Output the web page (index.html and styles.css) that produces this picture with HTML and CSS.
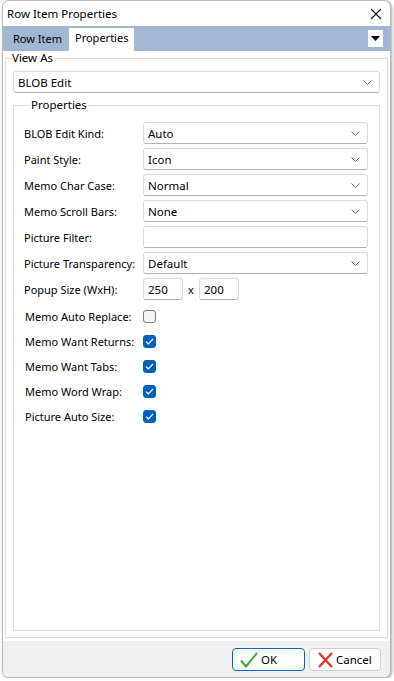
FILE: index.html
```html
<!DOCTYPE html>
<html lang="en">
<head>
    <meta charset="UTF-8">
    <title>Row Item Properties</title>
    <link rel="stylesheet" href="styles.css">
</head>
<body>
    <div class="window">
        <div class="titlebar">
            <span class="title">Row Item Properties</span>
            <svg class="closeIcon" width="12" height="12" viewBox="0 0 12 12">
                <path d="M1 1 L11 11 M11 1 L1 11" stroke="#1a1a1a" stroke-width="1.1" fill="none"/>
            </svg>
        </div>

        <div class="tabbar">
            <div class="tab">Row Item</div>
            <div class="tab active">Properties</div>
            <div class="tabMenu">
                <svg width="9" height="5" viewBox="0 0 9 5"><path d="M0 0 H9 L4.5 5 Z" fill="#000"/></svg>
            </div>
        </div>

        <div class="content">
            <fieldset class="group outer">
                <legend>View As</legend>
                <div class="combo wide">
                    <span>BLOB Edit</span>
                    <svg class="chev" width="9" height="5" viewBox="0 0 9 5"><path d="M0.5 0.5 L4.5 4.5 L8.5 0.5" stroke="#707070" fill="none"/></svg>
                </div>

                <fieldset class="group inner">
                    <legend>Properties</legend>

                    <div class="row">
                        <label class="lbl">BLOB Edit Kind:</label>
                        <div class="combo">
                            <span>Auto</span>
                            <svg class="chev" width="9" height="5" viewBox="0 0 9 5"><path d="M0.5 0.5 L4.5 4.5 L8.5 0.5" stroke="#707070" fill="none"/></svg>
                        </div>
                    </div>
                    <div class="row">
                        <label class="lbl">Paint Style:</label>
                        <div class="combo">
                            <span>Icon</span>
                            <svg class="chev" width="9" height="5" viewBox="0 0 9 5"><path d="M0.5 0.5 L4.5 4.5 L8.5 0.5" stroke="#707070" fill="none"/></svg>
                        </div>
                    </div>
                    <div class="row">
                        <label class="lbl">Memo Char Case:</label>
                        <div class="combo">
                            <span>Normal</span>
                            <svg class="chev" width="9" height="5" viewBox="0 0 9 5"><path d="M0.5 0.5 L4.5 4.5 L8.5 0.5" stroke="#707070" fill="none"/></svg>
                        </div>
                    </div>
                    <div class="row">
                        <label class="lbl">Memo Scroll Bars:</label>
                        <div class="combo">
                            <span>None</span>
                            <svg class="chev" width="9" height="5" viewBox="0 0 9 5"><path d="M0.5 0.5 L4.5 4.5 L8.5 0.5" stroke="#707070" fill="none"/></svg>
                        </div>
                    </div>
                    <div class="row">
                        <label class="lbl">Picture Filter:</label>
                        <div class="combo edit"></div>
                    </div>
                    <div class="row">
                        <label class="lbl">Picture Transparency:</label>
                        <div class="combo">
                            <span>Default</span>
                            <svg class="chev" width="9" height="5" viewBox="0 0 9 5"><path d="M0.5 0.5 L4.5 4.5 L8.5 0.5" stroke="#707070" fill="none"/></svg>
                        </div>
                    </div>
                    <div class="row">
                        <label class="lbl">Popup Size (WxH):</label>
                        <div class="combo edit small"><span>250</span></div>
                        <span class="times">x</span>
                        <div class="combo edit small"><span>200</span></div>
                    </div>

                    <div class="checks">
                        <div class="checkRow">
                            <label class="lbl">Memo Auto Replace:</label>
                            <span class="check"></span>
                        </div>
                        <div class="checkRow">
                            <label class="lbl">Memo Want Returns:</label>
                            <span class="check on"><svg width="9" height="7" viewBox="0 0 9 7"><path d="M1 3.6 L3.3 5.8 L8 1" stroke="#fff" stroke-width="1.2" fill="none"/></svg></span>
                        </div>
                        <div class="checkRow">
                            <label class="lbl">Memo Want Tabs:</label>
                            <span class="check on"><svg width="9" height="7" viewBox="0 0 9 7"><path d="M1 3.6 L3.3 5.8 L8 1" stroke="#fff" stroke-width="1.2" fill="none"/></svg></span>
                        </div>
                        <div class="checkRow">
                            <label class="lbl">Memo Word Wrap:</label>
                            <span class="check on"><svg width="9" height="7" viewBox="0 0 9 7"><path d="M1 3.6 L3.3 5.8 L8 1" stroke="#fff" stroke-width="1.2" fill="none"/></svg></span>
                        </div>
                        <div class="checkRow">
                            <label class="lbl">Picture Auto Size:</label>
                            <span class="check on"><svg width="9" height="7" viewBox="0 0 9 7"><path d="M1 3.6 L3.3 5.8 L8 1" stroke="#fff" stroke-width="1.2" fill="none"/></svg></span>
                        </div>
                    </div>
                </fieldset>
            </fieldset>
        </div>

        <div class="footer">
            <button class="btn primary">
                <svg width="18" height="16" viewBox="0 0 18 16"><path d="M1 8.5 L6 14.5 L17 1" stroke="#3da83d" stroke-width="2" fill="none"/></svg>
                OK
            </button>
            <button class="btn">
                <svg width="15" height="16" viewBox="0 0 15 16"><path d="M1 1 L14 15 M14 1 L1 15" stroke="#e3322d" stroke-width="2.2" fill="none"/></svg>
                Cancel
            </button>
        </div>
    </div>
</body>
</html>
```

FILE: styles.css
```css
body {
    margin: 0;
    background: #ffffff;
    font-family: 'Noto Sans', sans-serif;
    font-size: 11px;
    color: #000;
}

.window {
    box-sizing: border-box;
    margin-left: 2px;
    width: 389px;
    height: 678px;
    border: 1px solid #b9b9b9;
    border-radius: 7px;
    box-shadow: 1px 1px 3px rgba(0, 0, 0, 0.35);
    display: flex;
    flex-direction: column;
    overflow: hidden;
    background: #fff;
    white-space: nowrap;
}

.titlebar {
    height: 25px;
    display: flex;
    align-items: center;
    justify-content: space-between;
    padding: 0 8px 0 4px;
    flex-shrink: 0;
}

.title {
    font-size: 11.5px;
}

.tabbar {
    height: 25px;
    background: #a2b7d4;
    display: flex;
    align-items: flex-end;
    padding: 0 7px 0 0;
    flex-shrink: 0;
}

.tab {
    height: 23px;
    line-height: 22px;
    padding: 0 6px;
    margin-left: 4px;
    font-size: 11px;
}

.tab.active {
    background: #fff;
    margin-left: 1px;
    padding: 0 6px;
    line-height: 20px;
}

.tabMenu {
    margin-left: auto;
    align-self: center;
    width: 15px;
    height: 17px;
    background: #fff;
    display: flex;
    align-items: center;
    justify-content: center;
}

.content {
    flex: 1;
    padding: 0 2px 0 2px;
}

.group {
    margin: 0;
    padding: 0;
    border: 1px solid #dcdcdc;
    box-sizing: border-box;
}

.group legend {
    padding: 0 1px;
    line-height: 14px;
    font-size: 11.5px;
}

.outer {
    height: 587px;
}

.outer > legend {
    margin-left: 5px;
}

.inner {
    margin: 5px 7px 0 7px;
    height: 533px;
    padding: 10px 11px 0 10px;
}

.inner > legend {
    margin-left: 6px;
}

.combo {
    box-sizing: border-box;
    height: 22px;
    flex: 1;
    display: flex;
    align-items: center;
    justify-content: space-between;
    padding: 0 5px 0 4px;
    border: 1px solid #d9d9d9;
    border-bottom-color: #b0b0b0;
    border-radius: 3px;
    background: #fff;
    font-size: 11.5px;
}

.combo.wide {
    margin: 6px 7px 0 7px;
}

.chev {
    margin-right: 2px;
}

.combo.small {
    flex: 0 0 40px;
}

.times {
    width: 16px;
    text-align: center;
}

.row {
    display: flex;
    align-items: center;
    height: 22px;
    margin-bottom: 4px;
}

.lbl {
    width: 119px;
    flex-shrink: 0;
}

.checks {
    margin-top: 1px;
}

.checkRow {
    display: flex;
    align-items: center;
    height: 25px;
}

.checkRow .lbl {
    padding-left: 1px;
    box-sizing: border-box;
}

.check {
    box-sizing: border-box;
    width: 13px;
    height: 13px;
    border: 1px solid #7a7a7a;
    border-radius: 3px;
    background: #f6f6f6;
    display: flex;
    align-items: center;
    justify-content: center;
}

.check.on {
    background: #0060c0;
    border-color: #0060c0;
}

.footer {
    height: 36px;
    background: #f0f0f0;
    display: flex;
    justify-content: flex-end;
    align-items: flex-start;
    gap: 4px;
    padding: 7px 9px 0 0;
    box-sizing: border-box;
    flex-shrink: 0;
}

.btn {
    box-sizing: border-box;
    width: 72px;
    height: 23px;
    border: 1px solid #d0d0d0;
    border-radius: 4px;
    background: #fdfdfd;
    font-family: 'Noto Sans', sans-serif;
    font-size: 11.5px;
    display: flex;
    align-items: center;
    gap: 3px;
    padding: 0 0 0 8px;
}

.btn.primary {
    width: 73px;
    border-color: #0067c0;
    padding-left: 7px;
}
```
